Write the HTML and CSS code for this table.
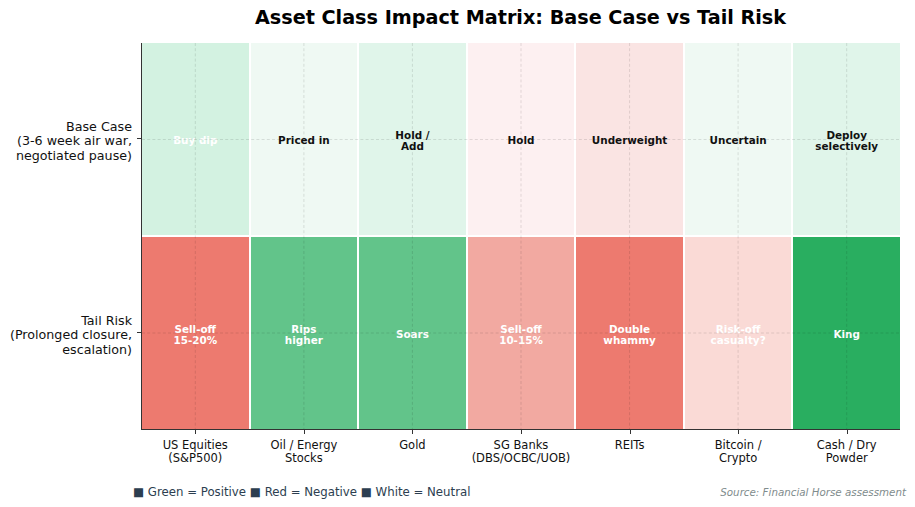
FILE: index.html
```html
<!DOCTYPE html>
<html>
<head>
<meta charset="utf-8">
<link rel="stylesheet" href="styles.css">
</head>
<body>
<div class="figure">
  <div class="title-row">
    <h1 class="title">Asset Class Impact Matrix: Base Case vs Tail Risk</h1>
  </div>
  <div class="plot">
    <div class="ylabels">
      <div class="ylabel">Base Case<br>(3-6 week air war,<br>negotiated pause)</div>
      <div class="ylabel">Tail Risk<br>(Prolonged closure,<br>escalation)</div>
    </div>
    <div class="axes">
      <div class="cell c-g20 light">Buy dip</div>
      <div class="cell c-g08">Priced in</div>
      <div class="cell c-g15">Hold /<br>Add</div>
      <div class="cell c-r08">Hold</div>
      <div class="cell c-r15">Underweight</div>
      <div class="cell c-g08">Uncertain</div>
      <div class="cell c-g15">Deploy<br>selectively</div>

      <div class="cell c-r70 light">Sell-off<br>15-20%</div>
      <div class="cell c-g75 light">Rips<br>higher</div>
      <div class="cell c-g75 light">Soars</div>
      <div class="cell c-r45 light">Sell-off<br>10-15%</div>
      <div class="cell c-r70 light">Double<br>whammy</div>
      <div class="cell c-r20 light">Risk-off<br>casualty?</div>
      <div class="cell c-g100 light">King</div>

      <svg class="grid" viewBox="0 0 758 386" preserveAspectRatio="none">
        <g stroke="rgba(0,0,0,0.11)" stroke-width="1" stroke-dasharray="3 2.2" vector-effect="non-scaling-stroke" fill="none">
          <line x1="53.3" y1="0" x2="53.3" y2="386"/>
          <line x1="161.9" y1="0" x2="161.9" y2="386"/>
          <line x1="270.4" y1="0" x2="270.4" y2="386"/>
          <line x1="379" y1="0" x2="379" y2="386"/>
          <line x1="487.6" y1="0" x2="487.6" y2="386"/>
          <line x1="596.1" y1="0" x2="596.1" y2="386"/>
          <line x1="704.7" y1="0" x2="704.7" y2="386"/>
          <line x1="0" y1="96.5" x2="758" y2="96.5"/>
          <line x1="0" y1="290" x2="758" y2="290"/>
        </g>
      </svg>
    </div>
  </div>
  <div class="xlabels">
    <div class="xlabel">US Equities<br>(S&amp;P500)</div>
    <div class="xlabel">Oil / Energy<br>Stocks</div>
    <div class="xlabel">Gold</div>
    <div class="xlabel">SG Banks<br>(DBS/OCBC/UOB)</div>
    <div class="xlabel">REITs</div>
    <div class="xlabel">Bitcoin /<br>Crypto</div>
    <div class="xlabel">Cash / Dry<br>Powder</div>
  </div>
  <div class="footer">
    <div class="legend"><span class="sq">■</span> Green = Positive <span class="sq">■</span> Red = Negative <span class="sq">■</span> White = Neutral</div>
    <div class="source">Source: Financial Horse assessment</div>
  </div>
</div>
</body>
</html>
```
FILE: styles.css
```css
html, body {
  margin: 0;
  padding: 0;
  background: #ffffff;
}

body {
  font-family: "DejaVu Sans", "Liberation Sans", sans-serif;
  color: #111;
}

.figure {
  width: 915px;
  height: 507px;
  display: flex;
  flex-direction: column;
  overflow: hidden;
}

.title-row {
  height: 43px;
  display: flex;
  padding-left: 141px;
  padding-right: 15px;
  box-sizing: border-box;
}

.title {
  flex: 1;
  margin: 0;
  padding-top: 7px;
  text-align: center;
  font-size: 19.2px;
  line-height: 22px;
  font-weight: bold;
  color: #000;
}

.plot {
  display: flex;
  height: 387px;
}

.ylabels {
  width: 141px;
  display: grid;
  grid-template-rows: 1fr 1fr;
  row-gap: 2px;
  padding-bottom: 1px;
  box-sizing: border-box;
}

.ylabel {
  position: relative;
  display: flex;
  align-items: center;
  justify-content: flex-end;
  text-align: right;
  font-size: 12.7px;
  line-height: 14.5px;
  padding-right: 9px;
  padding-top: 5px;
  color: #111;
}

.ylabel::after {
  content: "";
  position: absolute;
  right: 0;
  top: calc(50% - 1px);
  width: 4px;
  height: 1px;
  background: #333;
}

.axes {
  position: relative;
  width: 759px;
  box-sizing: border-box;
  border-left: 1px solid #333;
  border-bottom: 1px solid #333;
  display: grid;
  grid-template-columns: repeat(7, 1fr);
  grid-template-rows: 1fr 1fr;
  gap: 2px;
}

.cell {
  display: flex;
  align-items: center;
  justify-content: center;
  text-align: center;
  font-size: 10.4px;
  line-height: 10.5px;
  font-weight: bold;
  padding-top: 3px;
  color: #111;
}

.cell.light {
  color: #ffffff;
}

.c-g08 { background: #eff9f3; }
.c-g15 { background: #e0f5ea; }
.c-g20 { background: #d3f2e1; }
.c-g75 { background: #62c48a; }
.c-g100 { background: #29ae60; }
.c-r08 { background: #fdf0f1; }
.c-r15 { background: #fae4e3; }
.c-r20 { background: #fadad6; }
.c-r45 { background: #f2a9a1; }
.c-r70 { background: #ed7a6f; }

.grid {
  position: absolute;
  left: 0;
  top: 0;
  width: 100%;
  height: 100%;
  pointer-events: none;
}

.xlabels {
  display: grid;
  grid-template-columns: repeat(7, 1fr);
  column-gap: 2px;
  width: 758px;
  margin-left: 142px;
}

.xlabel {
  position: relative;
  text-align: center;
  font-size: 11.5px;
  line-height: 13px;
  padding-top: 8.5px;
  color: #111;
}

.xlabel::before {
  content: "";
  position: absolute;
  top: 0;
  left: 50%;
  width: 1px;
  height: 4px;
  background: #333;
}

.footer {
  display: flex;
  justify-content: space-between;
  align-items: center;
  padding: 20px 9px 0 133px;
  line-height: 14px;
}

.legend {
  font-size: 11.75px;
  color: #2c3e50;
  white-space: pre;
}

.sq {
  color: #2c3e50;
}

.source {
  font-size: 10.3px;
  font-style: italic;
  color: #7f8c8d;
}
```
